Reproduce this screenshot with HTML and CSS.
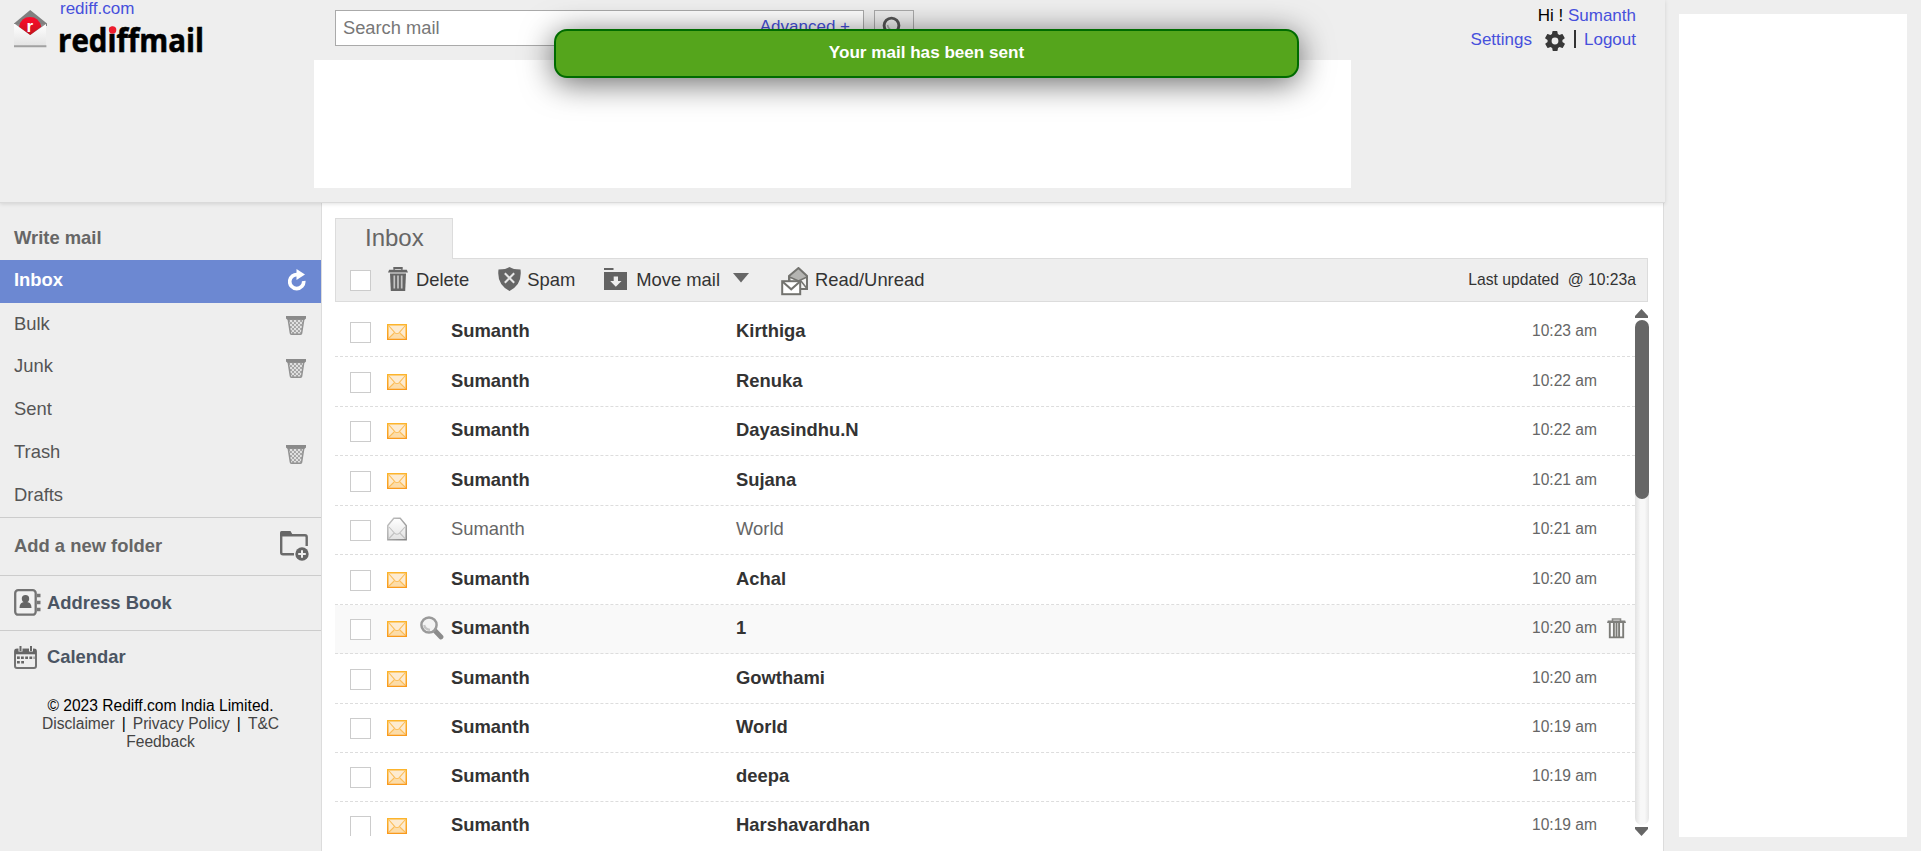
FILE: index.html
```html
<!DOCTYPE html>
<html lang="en">
<head>
<meta charset="utf-8">
<title>Rediffmail</title>
<link rel="stylesheet" href="styles.css">
</head>
<body>
<svg class="defs" width="0" height="0">
  <defs>
    <linearGradient id="gold" x1="0" y1="0" x2="0" y2="1"><stop offset="0" stop-color="#fcb42c"/><stop offset="1" stop-color="#f99a1c"/></linearGradient>
    <linearGradient id="silver" x1="0" y1="0" x2="1" y2="1"><stop offset="0" stop-color="#c4c4c4"/><stop offset="1" stop-color="#858585"/></linearGradient>
    <linearGradient id="paper" x1="0" y1="0" x2="0" y2="1"><stop offset="0" stop-color="#fff"/><stop offset="1" stop-color="#e2e2e2"/></linearGradient>
    <linearGradient id="ruby" x1="0" y1="0" x2="0" y2="1"><stop offset="0" stop-color="#ff0a2c"/><stop offset="1" stop-color="#c4141c"/></linearGradient>
    <pattern id="mesh" width="4" height="4" patternUnits="userSpaceOnUse"><rect width="4" height="4" fill="#a2a2a2"/><circle cx="1" cy="1" r="1.2" fill="#e2e2e2"/><circle cx="3" cy="3" r="1.2" fill="#e2e2e2"/></pattern>
  </defs>
  <symbol id="mail" viewBox="0 0 20 16">
    <rect x=".75" y=".75" width="18.5" height="14.5" fill="#fdebd0" stroke="url(#gold)" stroke-width="1.5"/>
    <path d="M2 14.2 7.4 9.4Q10 11.6 12.6 9.4L18 14.2Z" fill="#fcdca8"/>
    <path d="M2 2 8 8.8Q10 10.6 12 8.8L18 2M2 14 7.2 9M18 14 12.8 9" fill="none" stroke="#fbbd58" stroke-width="1.1"/>
  </symbol>
  <symbol id="open" viewBox="0 0 20 24">
    <path d="M.8 8.5 6.8 1.2H13.2L19.2 8.5V22.8H.8Z" fill="url(#paper)" stroke="url(#silver)" stroke-width="1.4"/>
    <path d="M2 10 7.5 16.2Q10 18.4 12.5 16.2L18 10M2 21.5 7.2 16M18 21.5 12.8 16" fill="none" stroke="#c2c2c2" stroke-width="1.1"/>
  </symbol>
  <symbol id="bin" viewBox="0 0 20 19">
    <path d="M2.2 3H17.8L15.6 17.2Q15.5 18.2 14.5 18.2H5.5Q4.5 18.2 4.4 17.2Z" fill="url(#mesh)" stroke="#929292" stroke-width="1.5"/>
    <path d="M0 0H20V2.4L18.6 3.8H1.4L0 2.4Z" fill="#8a8a8a"/>
  </symbol>
  <symbol id="trash" viewBox="0 0 20 24">
    <path d="M6.2 2.8V1H13.8V2.8" fill="none" stroke="#666" stroke-width="1.8"/>
    <path d="M1.2 2.8H18.8L20 5.6H0Z" fill="#666"/>
    <path d="M2 6.600H18L17.2 24H2.8Z" fill="#666"/>
    <path d="M6.300 8.500V21.500M10 8.500V21.500M13.700 8.500V21.500" stroke="#c4c4c4" stroke-width="1.700"/>
  </symbol>
  <symbol id="trash2" viewBox="0 0 19 21">
    <path d="M5.5 3V1H13.5V3" fill="none" stroke="#8a8a88" stroke-width="1.6"/>
    <path d="M.8 2.6H18.2L19 5H0Z" fill="#7f7f7c"/>
    <path d="M2.8 5V19.4H16.2V5M6.9 5V19M12.1 5V19M9.500 5V19" fill="none" stroke="#7c7c78" stroke-width="1.900"/>
  </symbol>
  <symbol id="lens" viewBox="0 0 24 24">
    <path d="M14.8 14.5 21 21" stroke="#8c8c8c" stroke-width="4.8" stroke-linecap="round"/>
    <circle cx="9" cy="9" r="7.600" fill="#f3f3f3" stroke="#9a9a9a" stroke-width="2.500"/>
    <path d="M4.2 9Q5 13.4 10 13.8" fill="none" stroke="#c4c4c4" stroke-width="2.200"/>
  </symbol>
</svg>

<div class="page">
  <div class="app">
    <header class="header">
      <div class="brand">
        <svg class="brand-icon" width="33" height="38" viewBox="0 0 33 38">
          <path d="M0 13.5 16.2 0 33 13.5V16H0Z" fill="#808080"/>
          <path d="M0 14H32V37H0Z" fill="url(#paper)"/>
          <path d="M1 14H32L16.200 25Z" fill="#8a8a8a"/>
          <path d="M5 16.800Q7 7 16 7T27.300 16.800L16.200 25Z" fill="url(#ruby)"/>
          <text x="12.500" y="22" class="brand-r">r</text>
          <path d="M0 36.2H32.4" stroke="#a2a2a2" stroke-width="2"/>
        </svg>
        <div class="brand-text">
          <a class="link portal">rediff.com</a>
          <svg class="wordmark" width="150" height="32" viewBox="0 0 150 32">
            <text x="0" y="26.500" textLength="146" lengthAdjust="spacingAndGlyphs">rediffmail</text>
            <circle cx="54.600" cy="5" r="3.700" fill="#ee1c2e"/>
          </svg>
        </div>
      </div>
      <div class="center">
        <div class="search">
          <div class="search-box"><span class="hint">Search mail</span><a class="link">Advanced +</a></div>
          <div class="search-btn">
            <svg width="24" height="26" viewBox="0 0 24 26"><circle cx="9.5" cy="9.5" r="7.4" fill="none" stroke="#555" stroke-width="2.9"/><path d="M5.5 9Q6.5 14 11 14.5" fill="none" stroke="#aaa" stroke-width="1.5"/><path d="M15 15 21 22" stroke="#555" stroke-width="4"/></svg>
          </div>
        </div>
        <div class="banner"></div>
      </div>
      <div class="account">
        <div>Hi&nbsp;! <a class="link">Sumanth</a></div>
        <div class="account-row">
          <a class="link">Settings</a>
          <svg class="gear" width="20" height="20" viewBox="2 2 20 20"><path fill="#383838" d="M19.4 13a7.5 7.5 0 0 0 0-2l2.1-1.6c.2-.2.3-.4.1-.7l-2-3.4c-.1-.2-.4-.3-.6-.2l-2.500 1a7.300 7.300 0 0 0-1.700-1l-.4-2.600a.5.5 0 0 0-.5-.4h-4a.5.5 0 0 0-.5.4l-.4 2.600a7.600 7.600 0 0 0-1.700 1l-2.500-1c-.2-.1-.5 0-.6.2l-2 3.400c-.1.2-.1.500.1.700L4.600 11a7.500 7.500 0 0 0 0 2l-2.100 1.600c-.2.2-.3.4-.1.700l2 3.400c.1.2.4.3.6.2l2.500-1c.5.4 1.100.7 1.700 1l.4 2.600c0 .2.200.4.500.4h4c.2 0 .5-.2.500-.4l.4-2.600a7.300 7.300 0 0 0 1.700-1l2.500 1c.2.1.5 0 .6-.2l2-3.400c.1-.2.1-.500-.1-.700zM12 15.400a3.400 3.400 0 1 1 0-6.800 3.400 3.400 0 0 1 0 6.800z"/></svg>
          <span class="divider"></span>
          <a class="link">Logout</a>
        </div>
      </div>
    </header>

    <div class="body">
      <aside class="sidebar">
        <div class="write">Write mail</div>
        <nav class="folders">
          <div class="folder active">Inbox<svg class="refresh" width="18" height="22" viewBox="0 0 18 22"><path d="M10 5.700A7 7 0 1 0 15.700 12" fill="none" stroke="#fff" stroke-width="3.700"/><path d="M8.500 0 17 5.500 8.500 11Z" fill="#fff"/></svg></div>
          <div class="folder">Bulk<svg width="20" height="19"><use href="#bin"/></svg></div>
          <div class="folder">Junk<svg width="20" height="19"><use href="#bin"/></svg></div>
          <div class="folder">Sent</div>
          <div class="folder">Trash<svg width="20" height="19"><use href="#bin"/></svg></div>
          <div class="folder">Drafts</div>
        </nav>
        <div class="tool add">Add a new folder
          <svg width="29" height="30" viewBox="0 0 29 30"><path d="M14 23.300H3Q1.200 23.300 1.200 21.500V3M1 4.200H25Q26.700 4.200 26.700 6V15" fill="none" stroke="#6b6b6b" stroke-width="2.400"/><path d="M0 5V1.500Q0 0 1.500 0H10.500L13 4.500Z" fill="#666"/><circle cx="22" cy="23" r="6.700" fill="#666"/><path d="M22 19.200V26.800M18.200 23H25.800" stroke="#eee" stroke-width="2"/></svg>
        </div>
        <div class="tool book">
          <svg width="27" height="27" viewBox="0 0 27 27"><rect x="1.200" y="1.200" width="20.500" height="24.500" rx="3" fill="#f1f1f1" stroke="#737373" stroke-width="2.300"/><circle cx="11.500" cy="9.700" r="3.700" fill="#666"/><path d="M5.500 19Q5.500 12.700 11.500 12.700T17.500 19Z" fill="#666"/><path d="M23 6.500H26.500M23 13.500H26.500M23 20.500H26.500" stroke="#777" stroke-width="3.400"/></svg>
          Address Book
        </div>
        <div class="tool cal">
          <svg width="23" height="23" viewBox="0 0 23 23"><rect x="1" y="3.500" width="21" height="18.500" rx="2" fill="#eee" stroke="#737373" stroke-width="2"/><path d="M1 3H22V8.300H1Z" fill="#666"/><path d="M6.500 0V5.500M17 0V5.500" stroke="#eee" stroke-width="4"/><path d="M6.500 0V5M17 0V5" stroke="#666" stroke-width="2"/><path d="M7 11.700H20.500M3 16.200H10.500" stroke="#666" stroke-width="2.600" stroke-dasharray="2.800 1.400"/><path d="M3 11.700H5.800" stroke="#666" stroke-width="2.600"/></svg>
          Calendar
        </div>
        <footer class="legal">
          <div class="copyright">© 2023 Rediff.com India Limited.</div>
          <div class="legal-links"><a>Disclaimer</a><b>|</b><a>Privacy Policy</a><b>|</b><a>T&amp;C</a></div>
          <div><a>Feedback</a></div>
        </footer>
      </aside>

      <main class="main">
        <div class="tab">Inbox</div>
        <div class="toolbar">
          <span class="check"></span>
          <span class="action delete"><svg width="20" height="24"><use href="#trash"/></svg>Delete</span>
          <span class="action spam"><svg width="23" height="24" viewBox="0 0 23 24"><path d="M11.500 0Q15 2.500 22.500 2.500Q24.500 17.500 11.500 24Q-1.500 17.500.5 2.500Q8 2.500 11.500 0Z" fill="#666"/><path d="M6.800 6.200 16.200 15.800M16.200 6.200 6.800 15.800" stroke="#e6e6e6" stroke-width="2"/></svg>Spam</span>
          <span class="action move"><svg width="23" height="22" viewBox="0 0 23 22"><path d="M0 0H9.500V2H0ZM0 4H23V22H0Z" fill="#636363"/><path d="M9.700 8.500H14V13H17.500L11.800 18.800 6.200 13H9.700Z" fill="#eee"/></svg>Move mail<svg class="caret" width="16" height="10"><path d="M0 0H16L8 9.500Z" fill="#666"/></svg></span>
          <span class="action read"><svg width="28" height="29" viewBox="0 0 28 29"><path d="M8 9 17.500 1 26 9V22H8Z" fill="#b5b5b2" stroke="#73736f" stroke-width="2"/><path d="M10 11 17.500 15.500 25 10V21H10Z" fill="#f3f3f1"/><path d="M8.500 10 17.500 14 26 10M25.500 21 20 14" fill="none" stroke="#73736f" stroke-width="1.500"/><rect x="1.200" y="14.200" width="18" height="13" fill="#fff" stroke="#73736f" stroke-width="2"/><path d="M2 15 10.200 22.300 18.500 15" fill="none" stroke="#73736f" stroke-width="2"/></svg>Read/Unread</span>
          <span class="updated">Last updated&nbsp; @ 10:23a</span>
        </div>
        <div class="list-wrap">
          <div class="list">
            <div class="row"><span class="check"></span><svg class="state"><use href="#mail"/></svg><span class="peek"></span><span class="from">Sumanth</span><span class="subject">Kirthiga</span><time>10:23 am</time><span class="remove"></span></div>
            <div class="row"><span class="check"></span><svg class="state"><use href="#mail"/></svg><span class="peek"></span><span class="from">Sumanth</span><span class="subject">Renuka</span><time>10:22 am</time><span class="remove"></span></div>
            <div class="row"><span class="check"></span><svg class="state"><use href="#mail"/></svg><span class="peek"></span><span class="from">Sumanth</span><span class="subject">Dayasindhu.N</span><time>10:22 am</time><span class="remove"></span></div>
            <div class="row"><span class="check"></span><svg class="state"><use href="#mail"/></svg><span class="peek"></span><span class="from">Sumanth</span><span class="subject">Sujana</span><time>10:21 am</time><span class="remove"></span></div>
            <div class="row seen"><span class="check"></span><svg class="state"><use href="#open"/></svg><span class="peek"></span><span class="from">Sumanth</span><span class="subject">World</span><time>10:21 am</time><span class="remove"></span></div>
            <div class="row"><span class="check"></span><svg class="state"><use href="#mail"/></svg><span class="peek"></span><span class="from">Sumanth</span><span class="subject">Achal</span><time>10:20 am</time><span class="remove"></span></div>
            <div class="row hover"><span class="check"></span><svg class="state"><use href="#mail"/></svg><span class="peek"><svg width="24" height="24"><use href="#lens"/></svg></span><span class="from">Sumanth</span><span class="subject">1</span><time>10:20 am</time><span class="remove"><svg width="19" height="21"><use href="#trash2"/></svg></span></div>
            <div class="row"><span class="check"></span><svg class="state"><use href="#mail"/></svg><span class="peek"></span><span class="from">Sumanth</span><span class="subject">Gowthami</span><time>10:20 am</time><span class="remove"></span></div>
            <div class="row"><span class="check"></span><svg class="state"><use href="#mail"/></svg><span class="peek"></span><span class="from">Sumanth</span><span class="subject">World</span><time>10:19 am</time><span class="remove"></span></div>
            <div class="row"><span class="check"></span><svg class="state"><use href="#mail"/></svg><span class="peek"></span><span class="from">Sumanth</span><span class="subject">deepa</span><time>10:19 am</time><span class="remove"></span></div>
            <div class="row"><span class="check"></span><svg class="state"><use href="#mail"/></svg><span class="peek"></span><span class="from">Sumanth</span><span class="subject">Harshavardhan</span><time>10:19 am</time><span class="remove"></span></div>
          </div>
          <div class="scrollbar">
            <svg width="14" height="9"><path d="M0 9V7L6.500 0 13 7V9Z" fill="#666"/></svg>
            <div class="track"><div class="thumb"></div></div>
            <svg width="14" height="9"><path d="M0 0V2L6.500 9 13 2V0Z" fill="#666"/></svg>
          </div>
        </div>
      </main>
    </div>
  </div>
  <div class="side-ad"></div>
</div>
<div class="toast">Your mail has been sent</div>
</body>
</html>
```
FILE: styles.css
```css
* { box-sizing: border-box; }
body {
  margin: 0;
  height: 851px;
  overflow: hidden;
  background: #eee;
  color: #333;
  font: 18.4px "Liberation Sans", Arial, sans-serif;
}
svg { display: block; flex: none; }
.defs { position: absolute; }
.link { color: #4650dc; }
.page { display: flex; height: 851px; }
.app { width: 1665px; display: flex; flex-direction: column; }
.side-ad { width: 228px; height: 823px; margin: 14px 0 0 14px; background: #fff; }

.header {
  position: relative;
  display: flex;
  height: 203px;
  border-bottom: 1px solid #dadada;
  box-shadow: 0 1px 4px rgba(0, 0, 0, .12);
  font-size: 17px;
}
.brand { display: flex; width: 314px; padding-left: 14px; }
.brand-icon { margin-top: 10px; }
.brand-r { font: bold 17px "Liberation Sans", Arial, sans-serif; fill: #fff; }
.brand-text { padding-left: 11px; }
.portal { display: block; height: 24px; line-height: 18px; padding-left: 2px; }
.wordmark text {
  font: bold 32px "Open Sans", sans-serif;
  fill: #000;
  stroke: #000;
  stroke-width: .6px;
  font-variant-ligatures: none;
}
.wordmark { margin-top: 1px; }
.center { width: 1037px; }
.search { display: flex; gap: 10px; height: 60px; padding: 10px 0 0 21px; }
.search-box, .search-btn { height: 36px; border: 1px solid #aaa; }
.search-box {
  display: flex;
  justify-content: space-between;
  width: 529px;
  padding: 0 13px 0 7px;
  background: #fff;
  line-height: 34px;
}
.hint { color: #777; font-size: 18.3px; }
.search-box .link { line-height: 31px; }
.search-btn { width: 40px; padding: 5px 0 0 7px; }
.banner { height: 128px; background: #fff; }
.account { flex: 1; padding: 4px 29px 0 0; text-align: right; line-height: 23.500px; color: #000; }
.account-row { display: flex; justify-content: flex-end; }
.gear { margin: 3px 9px 0 13px; }
.divider { width: 2px; height: 18px; margin: 2px 8px 0 0; background: #333; }

.body { display: flex; flex: 1; }
.sidebar { width: 322px; border-right: 1px solid #dcdcdc; color: #4b5563; }
.write { height: 57px; padding: 24px 0 0 14px; line-height: 22px; font-weight: bold; color: #666; }
.folders { height: 257px; }
.folder {
  display: flex;
  align-items: center;
  justify-content: space-between;
  height: 42.800px;
  padding: 0 15px 1px 14px;
  color: #555;
}
.folder svg { margin-top: 4px; }
.folder .refresh { margin-top: 0; }
.active { background: #6c88d2; color: #fff; font-weight: bold; padding-bottom: 3px; }
.tool { display: flex; align-items: center; border-top: 1px solid #ccc; font-weight: bold; }
.add { justify-content: space-between; height: 58px; padding: 0 12px 2px 14px; color: #666; }
.book { height: 55px; gap: 6px; padding: 0 0 1px 14px; }
.cal { height: 54px; gap: 10px; padding: 0 0 1px 14px; }
.legal { padding-top: 13px; text-align: center; font-size: 15.600px; line-height: 18px; color: #444; }
.legal b { font-weight: normal; color: #000; }
.legal-links { display: flex; justify-content: center; gap: 7px; }
.copyright { color: #000; }

.main {
  width: 1342px;
  padding: 15px 14px 0 13px;
  border-right: 1px solid #dcdcdc;
  margin-right: 1px;
  background: #fff;
}
.tab {
  position: relative;
  z-index: 1;
  width: 118px;
  height: 41px;
  padding-left: 29px;
  border: 1px solid #dcdcdc;
  border-bottom: 0;
  background: #eee;
  color: #666;
  font-size: 24px;
  line-height: 38px;
}
.toolbar {
  display: flex;
  align-items: center;
  width: 1313px;
  height: 44px;
  margin-top: -1px;
  padding-left: 14px;
  border: 1px solid #dcdcdc;
  background: #eee;
}
.check { flex: none; width: 21px; height: 21px; border: 1px solid #ccc; background: #fff; }
.toolbar .check { margin-top: 1px; }
.action { display: flex; align-items: center; height: 42px; }
.action svg { margin-top: -3px; }
.delete { gap: 8px; margin-left: 17px; }
.spam { gap: 6px; margin-left: 29px; }
.move { gap: 9px; margin-left: 29px; }
.action .caret { margin: -5px 0 0 4px; }
.read { gap: 6px; margin-left: 32px; }
.action.read svg { margin-top: 2px; }
.updated { margin-left: auto; padding-right: 11px; font-size: 15.700px; }

.list-wrap { display: flex; padding-top: 5px; }
.list { width: 1301px; height: 529px; overflow: hidden; }
.row {
  display: flex;
  align-items: center;
  height: 49px;
  padding: 0 0 2px 15px;
  border-bottom: 1px dashed #ddd;
  font-weight: bold;
}
.row:nth-child(1), .row:nth-child(2), .row:nth-child(4), .row:nth-child(6), .row:nth-child(8) { height: 50px; }
.row .check { margin-top: 3px; }
.state { width: 20px; height: 16px; margin: 2px 0 0 16px; }
.seen .state { height: 24px; margin-top: 0; }
.seen { font-weight: normal; color: #666; }
.hover { background: #f9f9f9; }
.peek { width: 44px; padding-left: 13px; }
.from { width: 285px; }
.subject { width: 796px; }
.row time { width: 75px; font-size: 15.600px; font-weight: normal; color: #666; }
.scrollbar { display: flex; flex-direction: column; gap: 2px; padding-top: 2px; width: 14px; height: 529px; }
.track { flex: 1; border-radius: 7px; background: linear-gradient(90deg, #e2e2e2, #f8f8f8 40%, #f8f8f8 70%, #e6e6e6); }
.thumb { height: 179px; border-radius: 7px; background: #666; }

.toast {
  position: absolute;
  left: 554px;
  top: 29px;
  width: 745px;
  height: 49px;
  border: 2px solid #006b00;
  border-radius: 13px;
  background: #55a51c;
  box-shadow: 0 5px 32px rgba(0, 0, 0, .6);
  color: #fff;
  font-size: 17.100px;
  font-weight: bold;
  line-height: 43px;
  text-align: center;
}
```
